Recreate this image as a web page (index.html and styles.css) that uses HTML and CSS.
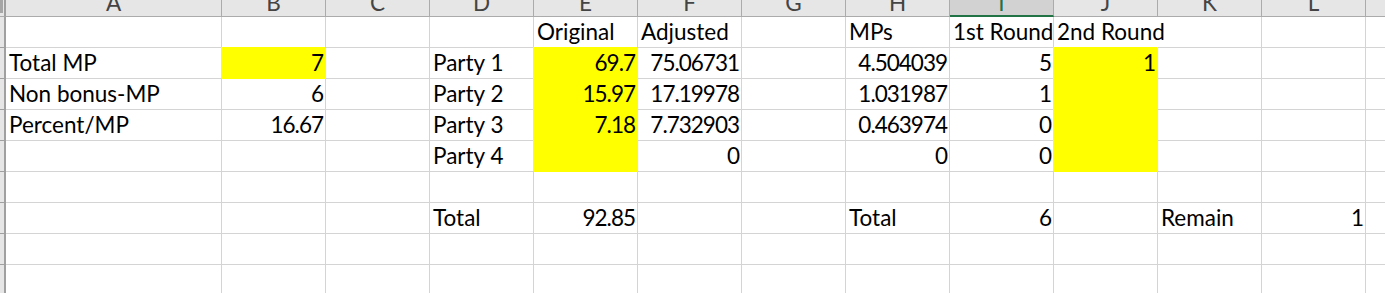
FILE: index.html
```html
<!DOCTYPE html>
<html lang="en">
<head>
  <meta charset="UTF-8" />
  <meta name="viewport" content="width=device-width, initial-scale=1.0"/>
  <title>MP allocation</title>
  <link rel="stylesheet" href="styles.css">
</head>
<body>

  <table class="sheet">
    <colgroup>
      <col class="col-rh">
      <col class="col-a">
      <col><col><col><col><col><col><col><col><col><col><col>
      <col>
    </colgroup>

    <!-- column letters -->
    <tr class="head">
      <th class="corner"><span></span></th>
      <th>A</th><th>B</th><th>C</th><th>D</th><th>E</th><th>F</th>
      <th>G</th><th>H</th><th class="sel">I</th><th>J</th><th>K</th><th>L</th><th></th>
    </tr>

    <tr>
      <th class="rh"></th>
      <td></td><td></td><td></td><td></td>
      <td>Original</td><td>Adjusted</td><td></td>
      <td>MPs</td><td>1st Round</td><td class="spill">2nd Round</td>
      <td></td><td></td><td></td>
    </tr>

    <tr>
      <th class="rh"></th>
      <td>Total MP</td><td class="n y">7</td><td></td>
      <td>Party 1</td><td class="n y">69.7</td><td class="n">75.06731</td><td></td>
      <td class="n">4.504039</td><td class="n">5</td><td class="n y">1</td>
      <td></td><td></td><td></td>
    </tr>

    <tr>
      <th class="rh"></th>
      <td>Non bonus-MP</td><td class="n">6</td><td></td>
      <td>Party 2</td><td class="n y">15.97</td><td class="n">17.19978</td><td></td>
      <td class="n">1.031987</td><td class="n">1</td><td class="y"></td>
      <td></td><td></td><td></td>
    </tr>

    <tr>
      <th class="rh"></th>
      <td>Percent/MP</td><td class="n">16.67</td><td></td>
      <td>Party 3</td><td class="n y">7.18</td><td class="n">7.732903</td><td></td>
      <td class="n">0.463974</td><td class="n">0</td><td class="y"></td>
      <td></td><td></td><td></td>
    </tr>

    <tr>
      <th class="rh"></th>
      <td></td><td></td><td></td>
      <td>Party 4</td><td class="y"></td><td class="n">0</td><td></td>
      <td class="n">0</td><td class="n">0</td><td class="y"></td>
      <td></td><td></td><td></td>
    </tr>

    <tr>
      <th class="rh"></th>
      <td></td><td></td><td></td><td></td><td></td><td></td><td></td>
      <td></td><td></td><td></td><td></td><td></td><td></td>
    </tr>

    <tr>
      <th class="rh"></th>
      <td></td><td></td><td></td>
      <td>Total</td><td class="n">92.85</td><td></td><td></td>
      <td>Total</td><td class="n">6</td><td></td>
      <td>Remain</td><td class="n">1</td><td></td>
    </tr>

    <tr>
      <th class="rh"></th>
      <td></td><td></td><td></td><td></td><td></td><td></td><td></td>
      <td></td><td></td><td></td><td></td><td></td><td></td>
    </tr>

    <tr>
      <th class="rh"></th>
      <td></td><td></td><td></td><td></td><td></td><td></td><td></td>
      <td></td><td></td><td></td><td></td><td></td><td></td>
    </tr>
  </table>

</body>
</html>
```

FILE: styles.css
```css
body {
  margin: 0;
  overflow: hidden;
  background: #fff;
  font-family: Lato, "Liberation Sans", sans-serif;
}



.sheet {
  table-layout: fixed;
  width: 1470px;
  border-collapse: separate;
  border-spacing: 0;
  font-size: 22.5px;
  color: #000;
}

.sheet col {
  width: 104px;
}

.sheet col.col-rh {
  width: 6px;
}

.sheet col.col-a {
  width: 216px;
}



/* cells */

.sheet td,
.sheet th {
  box-sizing: border-box;
  padding: 0 3px 5px;
  height: 31px;
  line-height: 20px;
  white-space: nowrap;
  vertical-align: bottom;
  text-align: left;
  font-weight: normal;
  border-right: 1px solid #d4d4d4;
  border-bottom: 1px solid #d4d4d4;
}

/* numbers sit right, digits a little tighter */
.sheet td.n {
  text-align: right;
  letter-spacing: -1px;
  padding-right: 2px;
}

.sheet td.y {
  background: #ffff00;
  border-color: #ffff00;
  box-shadow: -1px -1px 0 0 #ffff00;
}

/* text running into the next column hides the gridline */
.sheet td.spill {
  border-right-color: transparent;
}



/* column letters */

.head th {
  height: 17px;
  padding: 0;
  line-height: 6px;
  vertical-align: top;
  text-align: center;
  color: #444;
  background: #e6e6e6;
  border-right-color: #ababab;
  border-bottom-color: #ababab;
}

.head th.sel {
  color: #217346;
  background: #d2d2d2;
  border-bottom: 2px solid #217346;
}

.head th.corner {
  border-right: 2px solid #a0a0a0;
}

.head th.corner span {
  display: block;
  width: 3px;
  height: 13px;
  background: #a6a6a6;
}



/* row number strip */

.sheet th.rh {
  padding: 0;
  background: #e6e6e6;
  border-right: 2px solid #a0a0a0;
  border-bottom-color: #a0a0a0;
}
```
